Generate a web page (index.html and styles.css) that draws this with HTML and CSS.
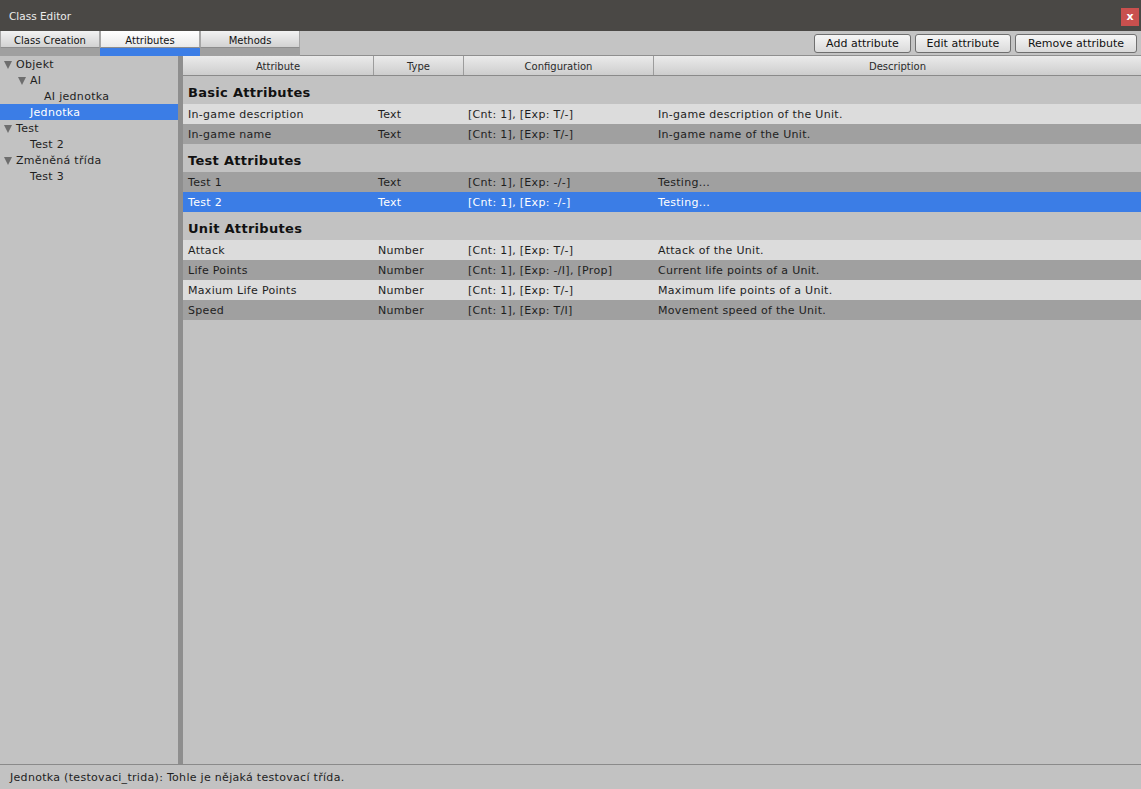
FILE: index.html
```html
<!DOCTYPE html>
<html lang="cs">
<head>
    <meta charset="UTF-8">
    <title>Class Editor</title>
    <link rel="stylesheet" href="styles.css">
</head>
<body>
<div class="window">
    <div class="titlebar">
        <span>Class Editor</span>
        <div class="close-btn">x</div>
    </div>

    <!-- tabs + buttons -->
    <div class="toolbar">
        <div class="tabs">
            <div class="tab">
                <div class="tab-label">Class Creation</div>
                <div class="tab-line"></div>
            </div>
            <div class="tab active">
                <div class="tab-label">Attributes</div>
                <div class="tab-line"></div>
            </div>
            <div class="tab">
                <div class="tab-label">Methods</div>
                <div class="tab-line"></div>
            </div>
        </div>
        <div class="actions">
            <button class="btn btn-add">Add attribute</button>
            <button class="btn btn-edit">Edit attribute</button>
            <button class="btn btn-remove">Remove attribute</button>
        </div>
    </div>

    <div class="main">
        <!-- class tree -->
        <div class="tree">
            <div class="tree-item lvl0"><span class="arrow"></span>Objekt</div>
            <div class="tree-item lvl1"><span class="arrow"></span>AI</div>
            <div class="tree-item lvl2">AI jednotka</div>
            <div class="tree-item lvl1 selected">Jednotka</div>
            <div class="tree-item lvl0"><span class="arrow"></span>Test</div>
            <div class="tree-item lvl1">Test 2</div>
            <div class="tree-item lvl0"><span class="arrow"></span>Změněná třída</div>
            <div class="tree-item lvl1">Test 3</div>
        </div>
        <div class="splitter"></div>

        <!-- attribute table -->
        <div class="table">
            <div class="table-head">
                <div class="col c1">Attribute</div>
                <div class="col c2">Type</div>
                <div class="col c3">Configuration</div>
                <div class="col c4">Description</div>
            </div>
            <div id="tableBody"></div>
        </div>
    </div>

    <div class="statusbar">Jednotka (testovaci_trida): Tohle je nějaká testovací třída.</div>
</div>

<script>
    const groups = [
        { name: "Basic Attributes", rows: [
            ["In-game description", "Text", "[Cnt: 1], [Exp: T/-]", "In-game description of the Unit."],
            ["In-game name", "Text", "[Cnt: 1], [Exp: T/-]", "In-game name of the Unit."]
        ]},
        { name: "Test Attributes", start: 1, rows: [
            ["Test 1", "Text", "[Cnt: 1], [Exp: -/-]", "Testing..."],
            ["Test 2", "Text", "[Cnt: 1], [Exp: -/-]", "Testing...", true]
        ]},
        { name: "Unit Attributes", rows: [
            ["Attack", "Number", "[Cnt: 1], [Exp: T/-]", "Attack of the Unit."],
            ["Life Points", "Number", "[Cnt: 1], [Exp: -/I], [Prop]", "Current life points of a Unit."],
            ["Maxium Life Points", "Number", "[Cnt: 1], [Exp: T/-]", "Maximum life points of a Unit."],
            ["Speed", "Number", "[Cnt: 1], [Exp: T/I]", "Movement speed of the Unit."]
        ]}
    ];

    const body = document.getElementById('tableBody');
    groups.forEach((group) => {
        let heading = document.createElement('div');
        heading.className = 'group-title';
        heading.textContent = group.name;
        body.appendChild(heading);

        group.rows.forEach((row, i) => {
            let r = document.createElement('div');
            r.className = 'row ' + ((i + (group.start || 0)) % 2 ? 'dark' : 'light');
            if (row[4]) r.classList.add('selected');
            r.innerHTML = `
                <div class="col c1">${row[0]}</div>
                <div class="col c2">${row[1]}</div>
                <div class="col c3">${row[2]}</div>
                <div class="col c4">${row[3]}</div>
            `;
            body.appendChild(r);
        });
    });
</script>
</body>
</html>
```

FILE: styles.css
```css
body {
    margin: 0;
    font-family: "DejaVu Sans", Verdana, sans-serif;
    font-size: 11px;
    letter-spacing: 0.3px;
    color: #1e1e1e;
    background: #c2c2c2;
}
.window {
    width: 1141px;
    height: 789px;
    display: flex;
    flex-direction: column;
    overflow: hidden;
}
.titlebar {
    height: 31px;
    flex-shrink: 0;
    background: #4a4845;
    color: #ececec;
    font-size: 10.5px;
    letter-spacing: 0;
    display: flex;
    justify-content: space-between;
    align-items: center;
    padding: 0 2px 0 9px;
}
.close-btn {
    width: 18px;
    height: 18px;
    margin-top: 3px;
    background: #c9504e;
    color: white;
    font-weight: bold;
    font-size: 11px;
    line-height: 17px;
    text-align: center;
}
.toolbar {
    height: 25px;
    flex-shrink: 0;
    display: flex;
    background: #c4c4c4;
    letter-spacing: 0;
}
.tabs {
    display: flex;
}
.tab {
    width: 100px;
    display: flex;
    flex-direction: column;
}
.tab-label {
    height: 16px;
    font-size: 10px;
    line-height: 19px;
    text-align: center;
    color: #111;
    background: linear-gradient(#f2f2f2, #d2d2d2);
    border-left: 1px solid #a6a6a6;
    border-right: 1px solid #a6a6a6;
    border-bottom: 1px solid #8d8d8d;
}
.tab.active .tab-label {
    background: linear-gradient(#ffffff, #e9e9e9);
}
.tab-line {
    flex: 1;
    background: #a0a0a0;
}
.tab.active .tab-line {
    background: #3b7de6;
}
.actions {
    flex: 1;
    display: flex;
    justify-content: flex-end;
    align-items: flex-start;
    gap: 4px;
    padding: 3px 4px 0 0;
    border-bottom: 1px solid #8f8f8f;
}
.btn {
    height: 19px;
    padding: 0;
    font-family: "DejaVu Sans", Verdana, sans-serif;
    font-size: 11px;
    color: #111;
    background: linear-gradient(#f6f6f6, #dadada);
    border: 1px solid #6f6f6f;
    border-radius: 3px;
}
.btn-add { width: 97px; }
.btn-edit { width: 96px; }
.btn-remove { width: 122px; }
.main {
    flex: 1;
    display: flex;
    min-height: 0;
}
.tree {
    width: 178px;
    background: #c2c2c2;
}
.tree-item {
    height: 16px;
    line-height: 18px;
    white-space: nowrap;
}
.tree-item.selected {
    background: #3b7de6;
    color: white;
}
.lvl0 { padding-left: 16px; }
.lvl1 { padding-left: 30px; }
.lvl2 { padding-left: 44px; }
.arrow {
    display: inline-block;
    width: 0;
    height: 0;
    margin-left: -12px;
    margin-right: 4px;
    border-left: 4px solid transparent;
    border-right: 4px solid transparent;
    border-top: 8px solid #6e6e6e;
    vertical-align: -1px;
}
.splitter {
    width: 5px;
    background: #8e8e8e;
}
.table {
    flex: 1;
    background: #c2c2c2;
}
.table-head {
    display: flex;
    height: 19px;
    border-bottom: 1px solid #8a8a8a;
    background: linear-gradient(#ebebeb, #cdcdcd);
    font-size: 10px;
    letter-spacing: 0;
    color: #2a2a2a;
}
.table-head .col {
    line-height: 21px;
    text-align: center;
    box-sizing: border-box;
}
.table-head .c2,
.table-head .c3,
.table-head .c4 {
    border-left: 1px solid #9c9c9c;
}
.c1 { width: 190px; }
.c2 { width: 90px; }
.c3 { width: 190px; }
.c4 { flex: 1; }
.group-title {
    padding: 6px 0 0 5px;
    height: 22px;
    line-height: 22px;
    font-size: 13px;
    font-weight: bold;
    color: #111;
}
.row {
    display: flex;
    height: 20px;
    line-height: 22px;
}
.row .col {
    padding-left: 5px;
    box-sizing: border-box;
    white-space: nowrap;
}
.row.light { background: #dcdcdc; }
.row.dark { background: #a0a0a0; }
.row.selected {
    background: #3b7de6;
    color: white;
}
.statusbar {
    height: 24px;
    flex-shrink: 0;
    border-top: 1px solid #8a8a8a;
    padding-left: 10px;
    line-height: 25px;
    background: #c2c2c2;
}
```
